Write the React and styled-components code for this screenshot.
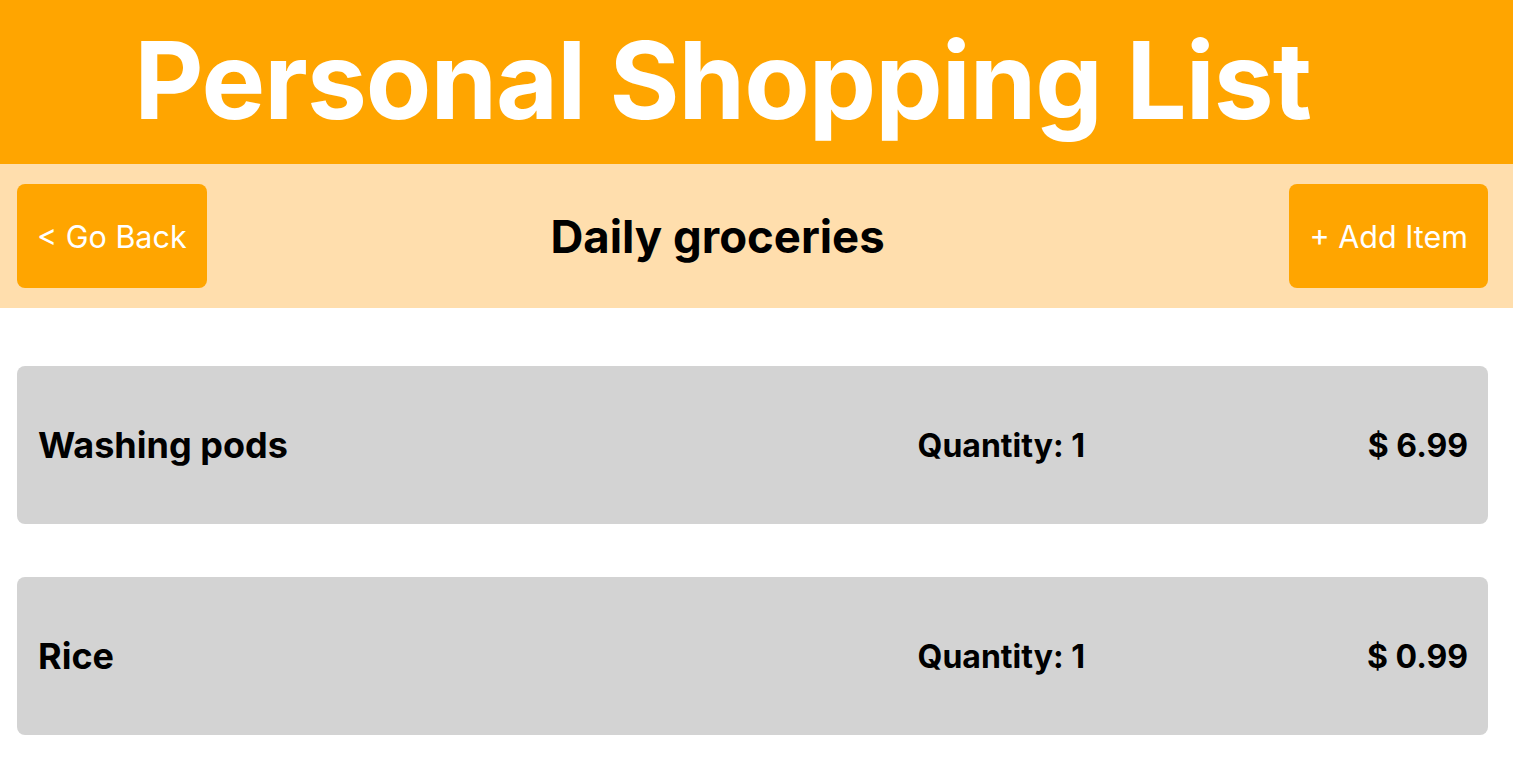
import styled, { createGlobalStyle } from "styled-components"

const GlobalStyle = createGlobalStyle`
    body {
        margin: 0;
        background: #ffffff;
        font-family: Inter, "Noto Sans", sans-serif;
    }
`

const items = [
    { name: 'Washing pods', quantity: 1, price: 6.99 },
    { name: 'Rice', quantity: 1, price: 0.99 },
]

function App(){
    return(
        <>
            <GlobalStyle/>
            <Header>
                <Title>Personal Shopping List</Title>
            </Header>
            <Bar>
                <Button>&lt; Go Back</Button>
                <ListName>Daily groceries</ListName>
                <Button>+ Add Item</Button>
            </Bar>
            <List>
                {items.map(item => (
                    <Item key={item.name}>
                        <Name>{item.name}</Name>
                        <Quantity>Quantity: {item.quantity}</Quantity>
                        <Price>$ {item.price}</Price>
                    </Item>
                ))}
            </List>
        </>
    )
}
export default App


const Header = styled.header`
    background: #ffa500;
    height: 164px;
    display: flex;
    align-items: center;
    justify-content: center;
    padding-right: 68px;
`
const Title = styled.h1`
    margin: 0 0 4px;
    color: #ffffff;
    font-size: 107px;
    font-weight: 700;
    line-height: 1;
    letter-spacing: -1px;
`
const Bar = styled.div`
    background: #ffdead;
    height: 144px;
    box-sizing: border-box;
    padding: 20px 25px 20px 17px;
    display: grid;
    grid-template-columns: auto 1fr auto;
    align-items: center;
`
const Button = styled.button`
    height: 104px;
    padding: 0 20px;
    border: none;
    border-radius: 8px;
    background: #ffa500;
    color: #ffffff;
    font-family: Inter, "Noto Sans", sans-serif;
    font-size: 30.5px;
    font-weight: 400;
`
const ListName = styled.h2`
    margin: 0;
    padding-right: 61px;
    text-align: center;
    font-size: 45.5px;
    font-weight: 700;
    color: #000000;
`
const List = styled.main`
    padding: 58px 25px 0 17px;
    display: flex;
    flex-direction: column;
    gap: 53px;
`
const Item = styled.div`
    height: 158px;
    box-sizing: border-box;
    padding: 0 20px 0 21px;
    border-radius: 8px;
    background: #d3d3d3;
    display: grid;
    grid-template-columns: 1fr auto 383px;
    align-items: center;
    color: #000000;
    font-weight: 700;
`
const Name = styled.span`
    font-size: 36px;
`
const Quantity = styled.span`
    font-size: 32px;
`
const Price = styled.span`
    font-size: 32px;
    text-align: right;
`
